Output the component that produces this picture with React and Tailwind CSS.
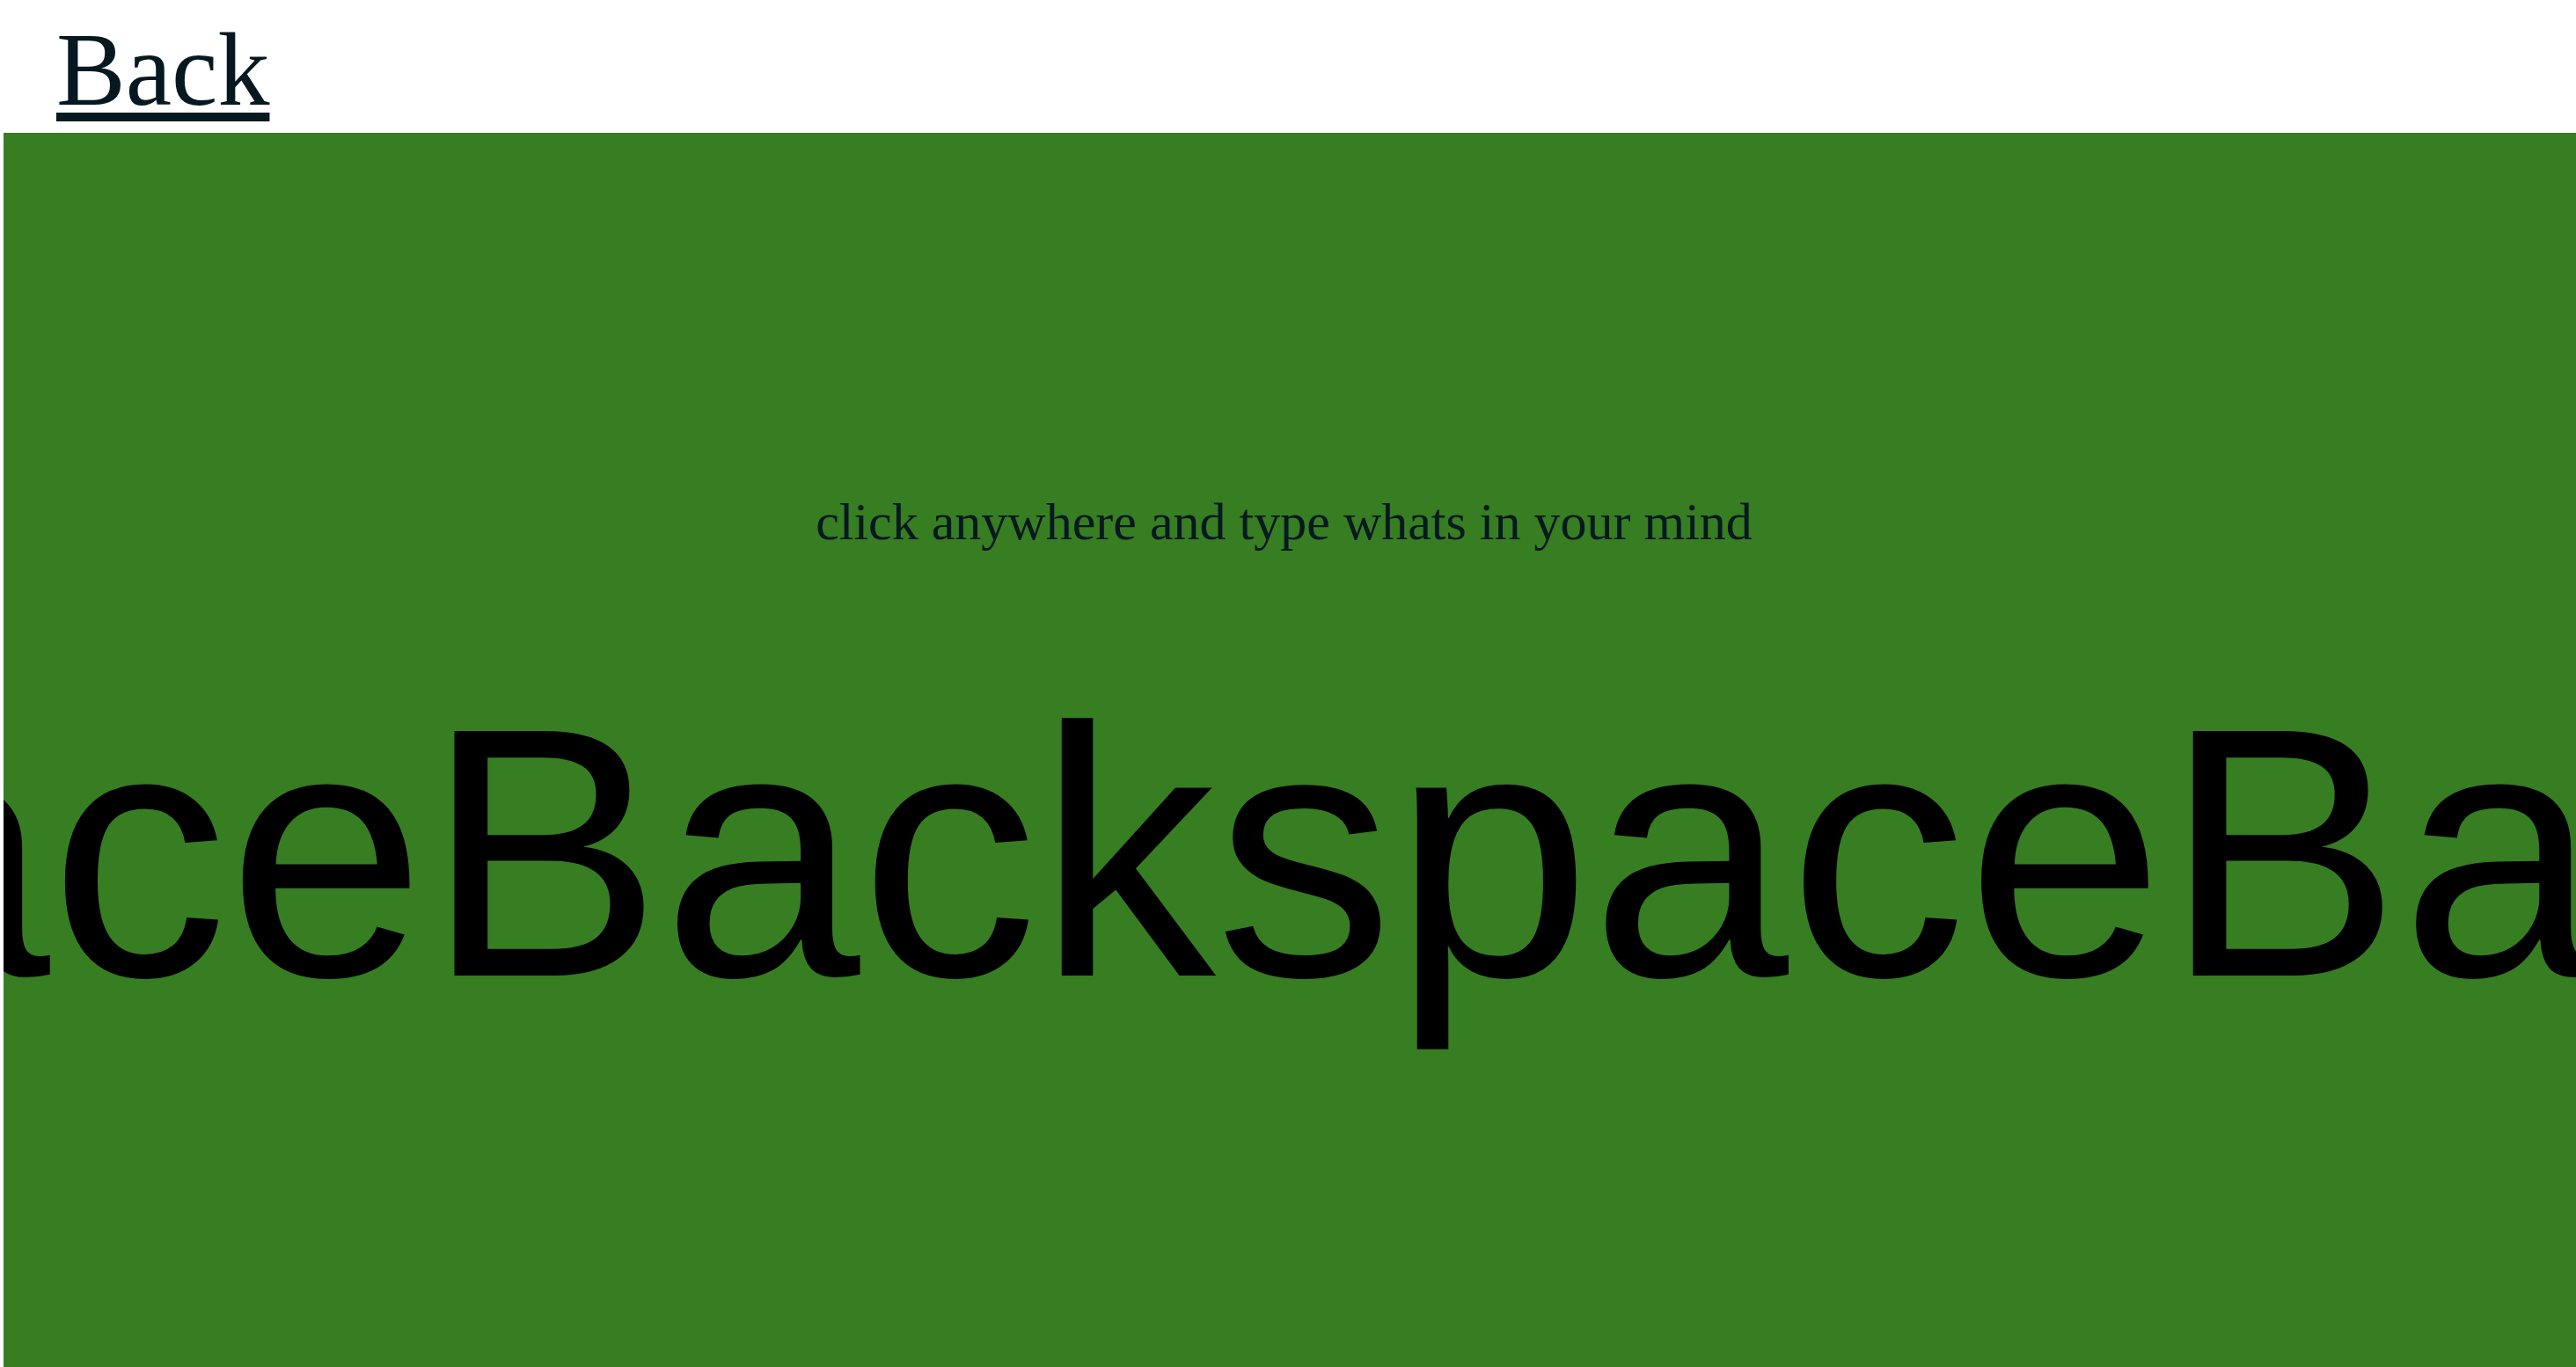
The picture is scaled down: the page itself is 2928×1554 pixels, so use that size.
export default function App() {
  return (
    <div className="h-screen w-full overflow-hidden flex flex-col bg-white">
      <div className="pl-[64px] pt-[21px] h-[151px] shrink-0">
        <a
          href="#"
          className="text-[118px] leading-none text-[#061820] underline decoration-[10px] underline-offset-[9px]"
          style={{ fontFamily: '"Liberation Serif", "Times New Roman", serif' }}
        >
          Back
        </a>
      </div>
      <div className="flex-1 ml-1 bg-[#377d22] overflow-hidden flex flex-col items-center">
        <div className="w-full flex justify-center pr-[13px] mt-[412px]">
          <p
            className="text-[60px] leading-none text-[#061820] whitespace-nowrap"
            style={{ fontFamily: '"Liberation Serif", "Times New Roman", serif' }}
          >
            click anywhere and type whats in your mind
          </p>
        </div>
        <div className="w-full flex justify-center pl-[11px] mt-[144px]">
          <div
            className="shrink-0 whitespace-nowrap text-[404px] leading-none text-black"
            style={{ fontFamily: '"Liberation Sans", Arial, Helvetica, sans-serif' }}
          >
            BackspaceBackspaceBackspace
          </div>
        </div>
      </div>
    </div>
  );
}
